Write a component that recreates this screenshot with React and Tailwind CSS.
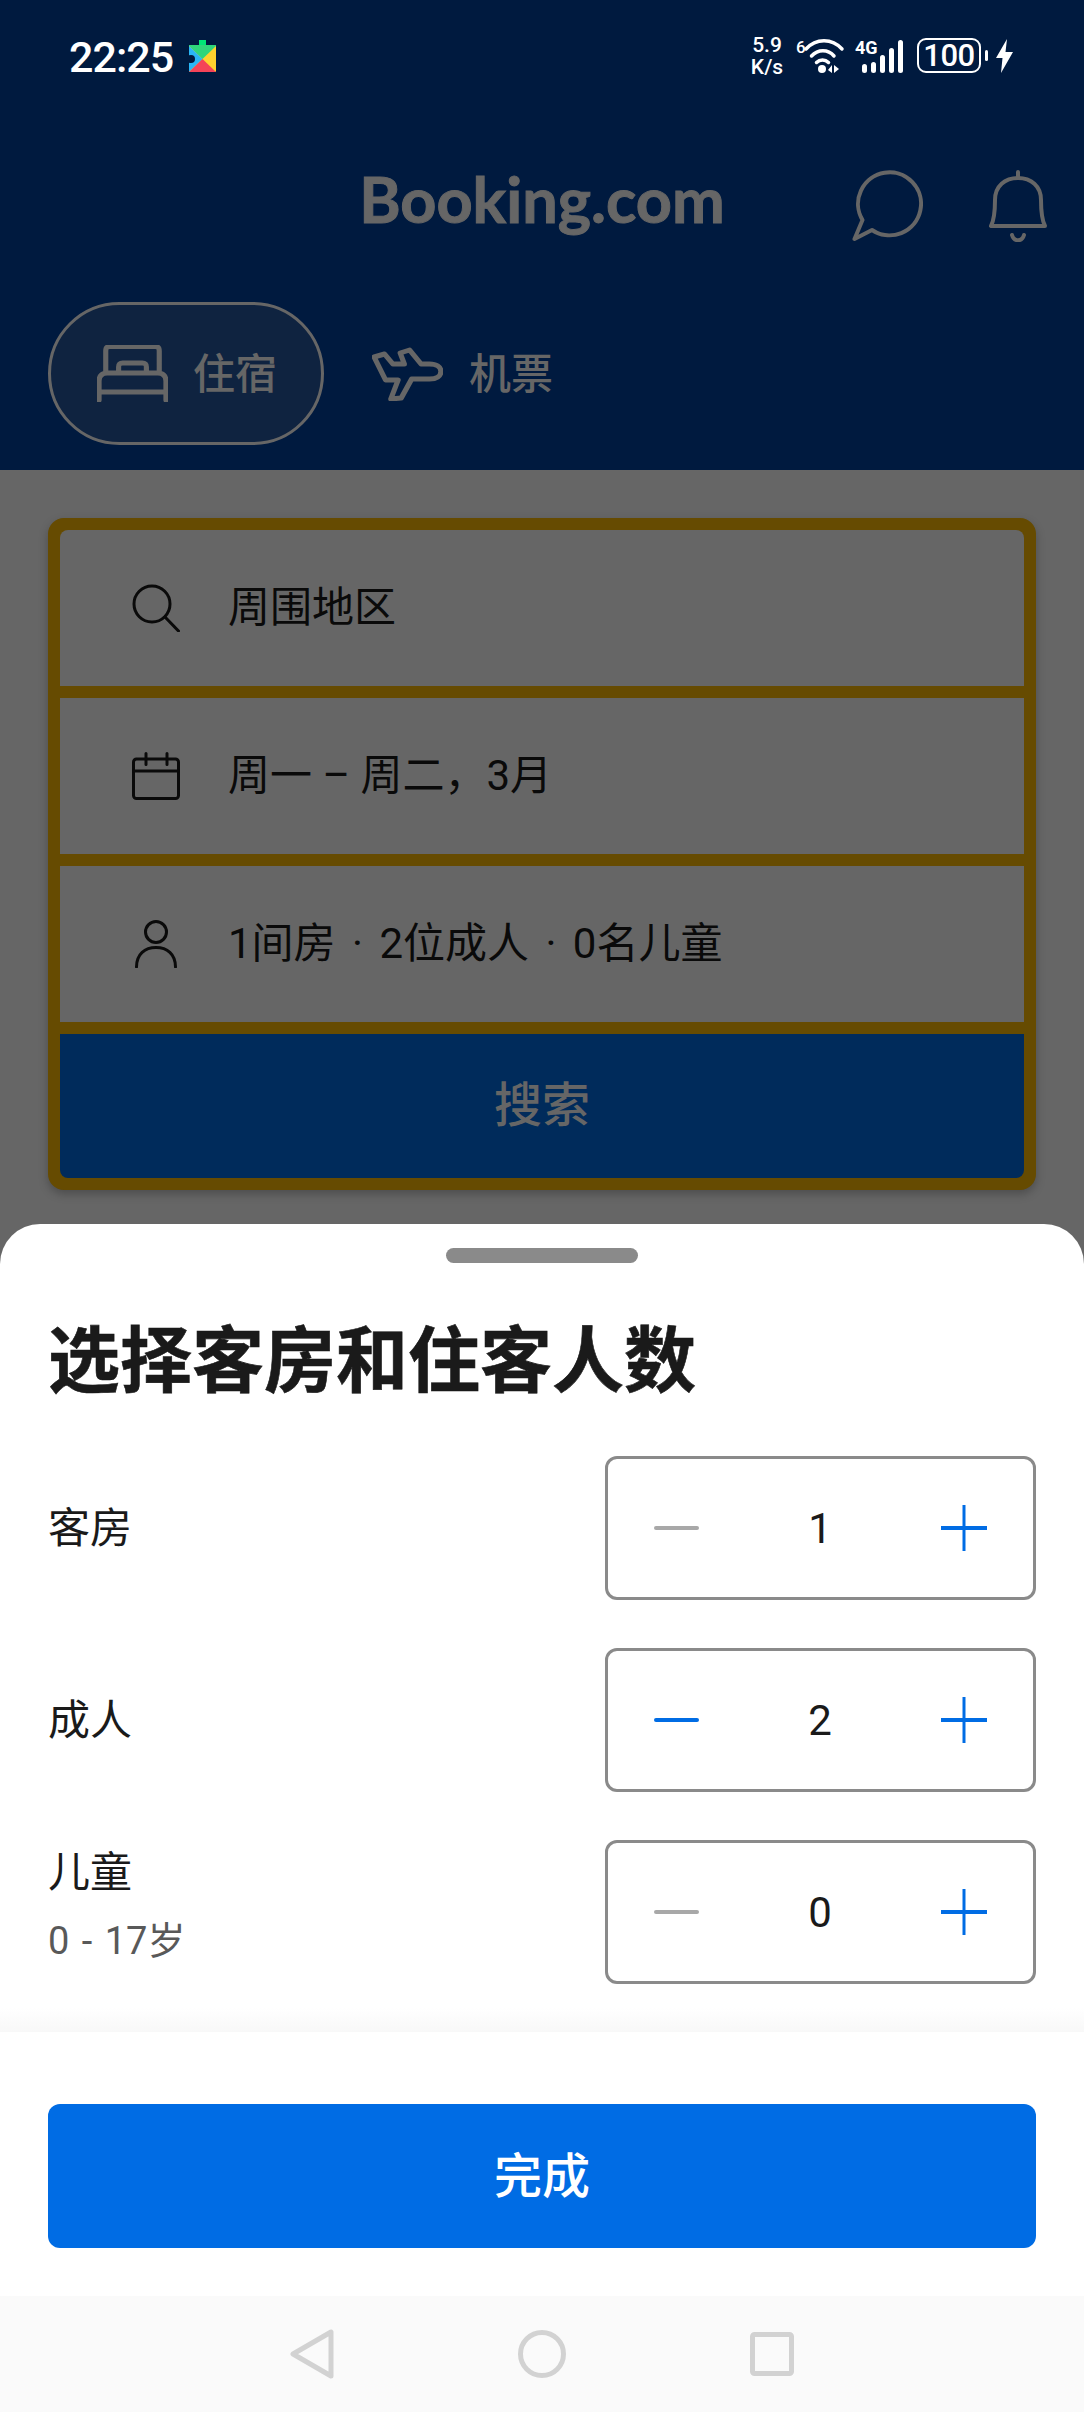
const cjk = { fontFamily: "Roboto, 'Noto Sans CJK SC', sans-serif" };

function StatusBar() {
    return (
        <div className="flex h-[111px] items-center justify-between pl-[69px] pr-[71px] text-white">
            <div className="flex items-center gap-[16px]">
                <span className="mt-[4px] text-[43px] font-medium leading-none tracking-[-1px]" style={{ fontFamily: "Roboto, sans-serif" }}>22:25</span>
                <svg width="27" height="32" viewBox="0 0 27 32">
                    <path d="M10 0h7v6h-7z" fill="#00e676" />
                    <path d="M1 5h25a1 1 0 0 1 1 1v25a1 1 0 0 1-1 1H1a1 1 0 0 1-1-1V6a1 1 0 0 1 1-1z" fill="#ffd22e" />
                    <path d="M0 6l13.5 13L27 6V5H0z" fill="#2fd67b" />
                    <path d="M0 6v26l13.5-13z" fill="#29b6f6" />
                    <path d="M0 32h27L13.5 19z" fill="#f44358" />
                    <circle cx="2" cy="19" r="4" fill="#001a3f" />
                </svg>
            </div>
            <div className="flex items-center" style={{ fontFamily: "Roboto, sans-serif" }}>
                <div className="flex w-[34px] flex-col items-center text-[21px] font-medium leading-[22px]">
                    <span>5.9</span>
                    <span>K/s</span>
                </div>
                <svg width="47" height="34" viewBox="0 0 47 34" fill="none" className="ml-[12px] overflow-visible">
                    <text x="0" y="14" fontSize="17" fontWeight="500" fill="#fff" fontFamily="Roboto">6</text>
                    <path d="M10 10C20 -1 36 -1 46 10" stroke="#fff" strokeWidth="3.5" strokeLinecap="round" />
                    <path d="M15.5 17C22 10 32 10 38 17" stroke="#fff" strokeWidth="3.5" strokeLinecap="round" />
                    <path d="M20.5 23.5C24 20 29 20 32.5 23.5" stroke="#fff" strokeWidth="3.5" strokeLinecap="round" />
                    <circle cx="26" cy="30" r="4" fill="#fff" />
                    <path d="M36 26v8l-4-3zM38 26v8l5-4z" fill="#fff" />
                </svg>
                <svg width="48" height="34" viewBox="0 0 48 34" className="ml-[12px] overflow-visible">
                    <text x="0" y="15" fontSize="18" fontWeight="700" fill="#fff" fontFamily="Roboto">4G</text>
                    <rect x="7" y="25" width="5" height="9" rx="2.5" fill="#fff" />
                    <rect x="16" y="23" width="5" height="11" rx="2.5" fill="#fff" />
                    <rect x="25" y="16" width="5" height="18" rx="2.5" fill="#fff" />
                    <rect x="34" y="9" width="5" height="25" rx="2.5" fill="#fff" />
                    <rect x="43" y="1" width="5" height="33" rx="2.5" fill="#fff" />
                </svg>
                <div className="ml-[14px] flex h-[35px] w-[64px] items-center justify-center rounded-[9px] border-2 border-white text-[31px] font-medium leading-none tracking-[-0.5px]">
                    100
                </div>
                <span className="ml-[4px] h-[11px] w-[3px] rounded-full bg-white" />
                <svg width="17" height="34" viewBox="0 0 17 34" className="ml-[8px]">
                    <path d="M11 0L0 19h6.5L5 34l12-21H9.5z" fill="#fff" />
                </svg>
            </div>
        </div>
    );
}

function TopBar() {
    return (
        <div className="grid h-[191px] grid-cols-[1fr_auto_1fr] items-start">
            <div />
            <span
                className="mt-[56px] text-[63px] font-bold leading-none text-[#666] [-webkit-text-stroke:1px_#666]"
                style={{ fontFamily: "Lato, sans-serif" }}
            >
                Booking.com
            </span>
            <div className="mt-[59px] flex justify-end gap-[66px] pr-[37px]">
                <svg width="72" height="72" viewBox="0 0 72 72" fill="none" stroke="#666" strokeWidth="4" strokeLinejoin="round">
                    <path d="M11.5 50L3.5 69 21 60A31.5 31.5 0 1 0 11.5 50z" />
                </svg>
                <svg width="58" height="72" viewBox="0 0 58 72" fill="none" stroke="#666" strokeWidth="4" strokeLinecap="round" strokeLinejoin="round">
                    <path d="M2 56h54C53 50 52 42 52 30 52 16 42 8 29 8S6 16 6 30C6 42 5 50 2 56z" />
                    <path d="M29 2v6M23 65c2 7 10 7 12 0" />
                </svg>
            </div>
        </div>
    );
}

function Tabs() {
    return (
        <div className="flex h-[143px] items-center pl-[48px]">
            <div className="flex h-[143px] w-[276px] items-center rounded-[72px] border-[3px] border-[#666] bg-[#0f2340] pl-[46px]">
                <svg width="71" height="57" viewBox="0 0 69 57" preserveAspectRatio="none" fill="none" stroke="#666" strokeWidth="5" strokeLinecap="round">
                    <path d="M2 55V36c0-5 3-8 8-8h49c5 0 8 3 8 8v19M2 47h65M8.5 28V6c0-3 1-4.5 4-4.5h44c3 0 4 1.5 4 4.5v22M21 28v-6c0-3 1-4 4-4h19c3 0 4 1 4 4v6" />
                </svg>
                <span className="ml-[25px] mt-[2px] text-[42px] font-medium leading-none text-[#666]" style={cjk}>住宿</span>
            </div>
            <svg width="71" height="54" viewBox="0 0 68 54" preserveAspectRatio="none" fill="none" stroke="#666" strokeWidth="5" strokeLinejoin="round" className="ml-[48px]">
                <path d="M2 10L12 7l8 10H31L27 6l9-3 11 14H55C62 17 66 20 66 24.5 66 29 62 32 55 32H38L28 51l-10 1 7-19H13z" />
            </svg>
            <span className="ml-[26px] mt-[2px] text-[42px] font-medium leading-none text-[#666]" style={cjk}>机票</span>
        </div>
    );
}

function SearchIcon() {
    return (
        <svg width="48" height="48" viewBox="0 0 48 48" fill="none" stroke="#0a0a0a" strokeWidth="3" strokeLinecap="round">
            <circle cx="20" cy="20" r="18" />
            <path d="M33 33l13.5 14" />
        </svg>
    );
}

function CalendarIcon() {
    return (
        <svg width="48" height="48" viewBox="0 0 48 48" fill="none" stroke="#0a0a0a" strokeWidth="3" strokeLinecap="round">
            <rect x="1.5" y="7" width="45" height="39.5" rx="3" />
            <path d="M1.5 19h45M14 1.5v11M35 1.5v11" />
        </svg>
    );
}

function PersonIcon() {
    return (
        <svg width="48" height="48" viewBox="0 0 48 48" fill="none" stroke="#0a0a0a" strokeWidth="3" strokeLinecap="round">
            <circle cx="24" cy="12" r="10.5" />
            <path d="M4.5 47C4.5 34 13 27.5 24 27.5S43.5 34 43.5 47" />
        </svg>
    );
}

function Field({ icon, text, className = "" }) {
    return (
        <div className="flex h-[156px] items-center bg-[#666] pl-[72px]">
            <span className="flex h-[48px] w-[48px] items-center justify-center">{icon}</span>
            <span className={`ml-[48px] text-[42px] leading-none text-[#0a0a0a] ${className}`} style={cjk}>{text}</span>
        </div>
    );
}

function SearchCard() {
    return (
        <div className="rounded-[16px] border-[12px] border-[#664b01] bg-[#664b01] shadow-[0_4px_10px_rgba(0,0,0,0.25)]">
            <div className="flex flex-col gap-[12px] overflow-hidden rounded-[8px]">
                <Field icon={<SearchIcon />} text="周围地区" />
                <Field icon={<CalendarIcon />} text="周一 – 周二，3月" />
                <Field icon={<PersonIcon />} text="1间房 · 2位成人 · 0名儿童" className="[word-spacing:6px]" />
                <div className="flex h-[144px] items-center justify-center bg-[#002b5b] text-[48px] font-medium leading-none text-[#666]" style={cjk}>
                    搜索
                </div>
            </div>
        </div>
    );
}

function Stepper({ value, canDecrease }) {
    return (
        <div className="flex h-[144px] w-[431px] items-center justify-between rounded-[12px] border-[3px] border-[#8a8a8a] px-[46px]">
            <span className={canDecrease ? "h-[4px] w-[45px] rounded-full bg-[#006ce4]" : "h-[4px] w-[45px] rounded-full bg-[#a8a8a8]"} />
            <span className="mt-[2px] text-[42px] leading-none text-[#1a1a1a]" style={cjk}>{value}</span>
            <svg width="46" height="46" viewBox="0 0 46 46" stroke="#006ce4" fill="none">
                <path d="M0 23h46" strokeWidth="4" />
                <path d="M23 0v46" strokeWidth="3" />
            </svg>
        </div>
    );
}

const rows = [
    { label: "客房", value: 1, canDecrease: false },
    { label: "成人", value: 2, canDecrease: true },
    { label: "儿童", sub: "0 - 17岁", value: 0, canDecrease: false },
];

function Sheet() {
    return (
        <div className="flex flex-1 flex-col rounded-t-[40px] bg-white" style={cjk}>
            <div className="mx-auto mt-[24px] h-[15px] w-[192px] rounded-full bg-[#8a8a8a]" />
            <h1 className="mt-[57px] pl-[48px] text-[72px] font-bold leading-[84px] text-[#1a1a1a] [-webkit-text-stroke:0.6px_#1a1a1a]">选择客房和住客人数</h1>
            <div className="mt-[52px] flex flex-col gap-[48px] px-[48px]">
                {rows.map((row) => (
                    <div key={row.label} className="flex items-center justify-between">
                        <div className={row.sub ? "flex flex-col pb-[17px]" : "flex flex-col pt-[2px]"}>
                            <span className="text-[42px] leading-[56px] text-[#1a1a1a]">{row.label}</span>
                            {row.sub && <span className="mt-[18px] text-[38px] leading-[44px] text-[#595959] [word-spacing:3px]">{row.sub}</span>}
                        </div>
                        <Stepper value={row.value} canDecrease={row.canDecrease} />
                    </div>
                ))}
            </div>
            <div className="mt-[24px] h-[24px] bg-linear-to-b from-white to-[#f8f8f8]" />
            <div className="mx-[48px] mt-[72px] flex h-[144px] items-center justify-center rounded-[12px] bg-[#006ce4] text-[48px] font-medium leading-none text-white">
                <span className="mt-[2px]">完成</span>
            </div>
            <div className="mt-auto flex h-[116px] items-center justify-center gap-[184px] bg-[#fafafa]">
                <svg width="44" height="50" viewBox="0 0 44 50" fill="none" stroke="#d2d2d2" strokeWidth="5" strokeLinejoin="round">
                    <path d="M41 3v44L3 25z" />
                </svg>
                <svg width="48" height="48" viewBox="0 0 48 48" fill="none" stroke="#d2d2d2" strokeWidth="5">
                    <circle cx="24" cy="24" r="21.5" />
                </svg>
                <svg width="44" height="44" viewBox="0 0 44 44" fill="none" stroke="#d2d2d2" strokeWidth="5">
                    <rect x="2.5" y="2.5" width="39" height="39" rx="2" />
                </svg>
            </div>
        </div>
    );
}

export default function App() {
    return (
        <div className="flex h-[2412px] w-[1084px] flex-col overflow-hidden bg-[#666]">
            <div className="h-[470px] bg-[#001a3f]">
                <StatusBar />
                <TopBar />
                <Tabs />
            </div>
            <div className="px-[48px] pt-[48px] pb-[34px]">
                <SearchCard />
            </div>
            <Sheet />
        </div>
    );
}
